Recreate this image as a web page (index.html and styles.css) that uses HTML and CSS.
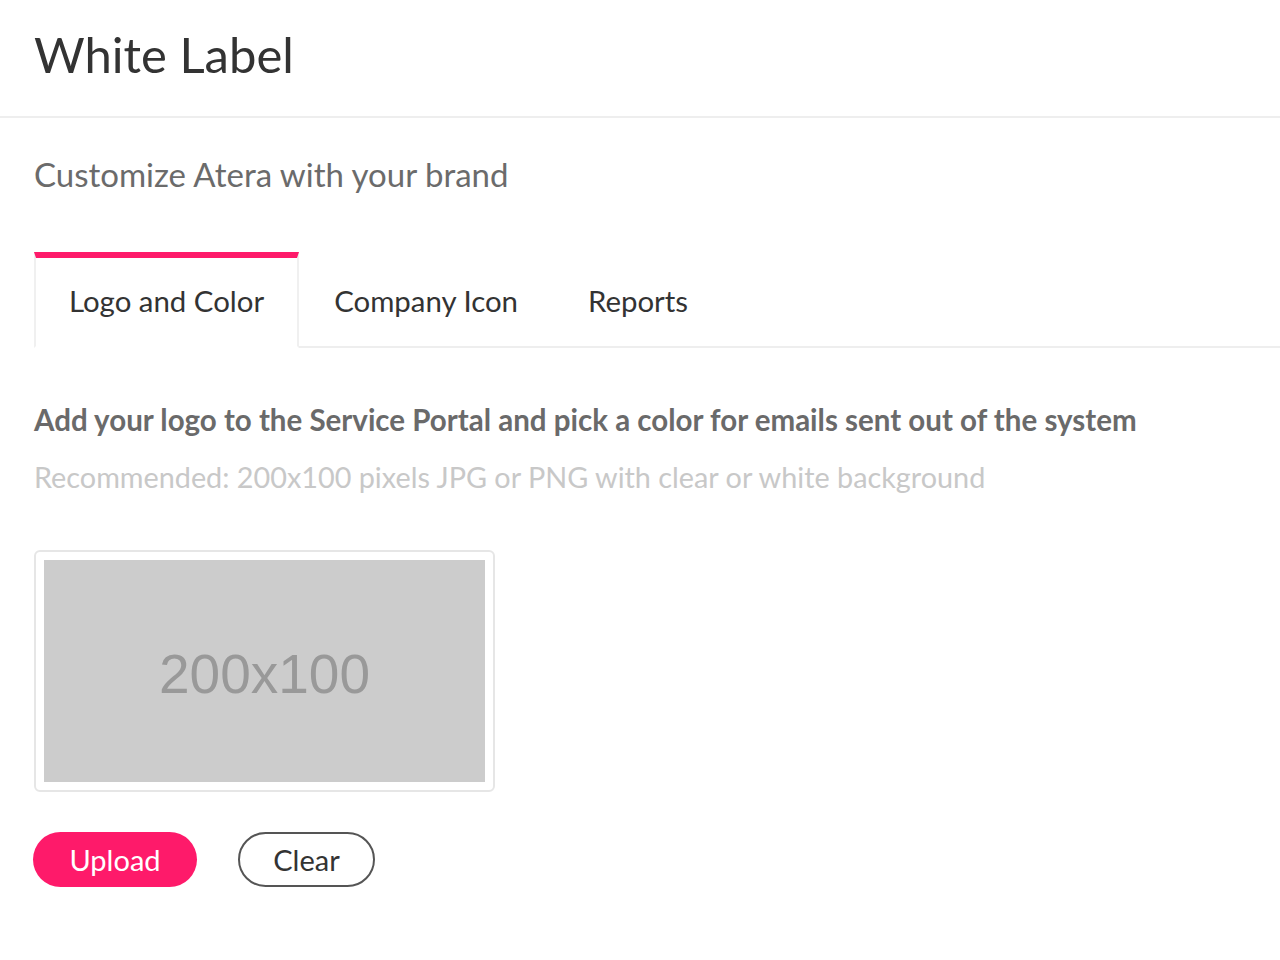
FILE: index.html
```html
<!DOCTYPE html>
<html>
<head>
<meta charset="utf-8">
<link rel="stylesheet" href="styles.css">
</head>
<body>
<header class="page-header">
  <h1 class="page-title">White Label</h1>
</header>
<main class="content">
  <p class="subtitle">Customize Atera with your brand</p>
  <nav class="tabs">
    <div class="tab tab-active">Logo and Color</div>
    <div class="tab">Company Icon</div>
    <div class="tab">Reports</div>
    <div class="tab-fill"></div>
  </nav>
  <section class="panel">
    <p class="panel-lead">Add your logo to the Service Portal and pick a color for emails sent out of the system</p>
    <p class="panel-hint">Recommended: 200x100 pixels JPG or PNG with clear or white background</p>
    <div class="logo-frame">
      <div class="logo-placeholder">200x100</div>
    </div>
    <div class="actions">
      <button class="btn btn-primary">Upload</button>
      <button class="btn btn-outline">Clear</button>
    </div>
  </section>
</main>
</body>
</html>
```
FILE: styles.css
```css
* { box-sizing: border-box; }
html, body { margin: 0; padding: 0; background: #fff; }
body {
  font-family: Lato, "Open Sans", "Liberation Sans", sans-serif;
  color: #333;
}
.page-header {
  height: 118px;
  border-bottom: 2px solid #eeeeee;
  padding: 0 34px 8px;
  display: flex;
  align-items: center;
}
.page-title {
  margin: 0;
  font-size: 49px;
  font-weight: 400;
  color: #333;
  line-height: 1;
}
.content { padding: 0 0 0 34px; }
.subtitle {
  margin: 0;
  padding-top: 36px;
  font-size: 33px;
  line-height: 40px;
  color: #6b6b6b;
}
.tabs {
  display: flex;
  margin-top: 58px;
  height: 96px;
}
.tab {
  padding: 0 35px 4px;
  font-size: 29.4px;
  color: #333;
  display: flex;
  align-items: center;
  border-top: 6px solid transparent;
  border-bottom: 2px solid #eeeeee;
}
.tab-active {
  padding-left: 33px;
  padding-right: 33px;
  border-top-color: #fe1a6a;
  border-left: 2px solid #f0f0f0;
  border-right: 2px solid #f0f0f0;
  border-bottom-color: transparent;
}
.tab-fill {
  flex: 1;
  border-bottom: 2px solid #eeeeee;
}
.panel { padding-top: 52px; }
.panel-lead {
  margin: 0;
  font-size: 29.5px;
  font-weight: 700;
  line-height: 40px;
  color: #6a6a6a;
}
.panel-hint {
  margin: 17px 0 0;
  font-size: 28.8px;
  line-height: 40px;
  color: #c8c8c8;
}
.logo-frame {
  margin-top: 53px;
  width: 461px;
  height: 242px;
  border: 2px solid #e6e6e6;
  border-radius: 6px;
  padding: 8px;
}
.logo-placeholder {
  width: 100%;
  height: 100%;
  background: #cccccc;
  color: #999;
  font-family: "Liberation Sans", Arial, sans-serif;
  font-size: 55px;
  padding-top: 6px;
  display: flex;
  align-items: center;
  justify-content: center;
}
.actions {
  display: flex;
  gap: 41px;
  margin-top: 40px;
  margin-left: -1px;
}
.btn {
  height: 55px;
  border-radius: 28px;
  font-family: inherit;
  font-size: 29px;
  padding: 0 30px;
  cursor: pointer;
}
.btn-primary {
  background: #fe1a6a;
  color: #fff;
  border: none;
  width: 164px;
}
.btn-outline {
  background: #fff;
  color: #333;
  border: 2px solid #555;
  width: 137px;
}
```
